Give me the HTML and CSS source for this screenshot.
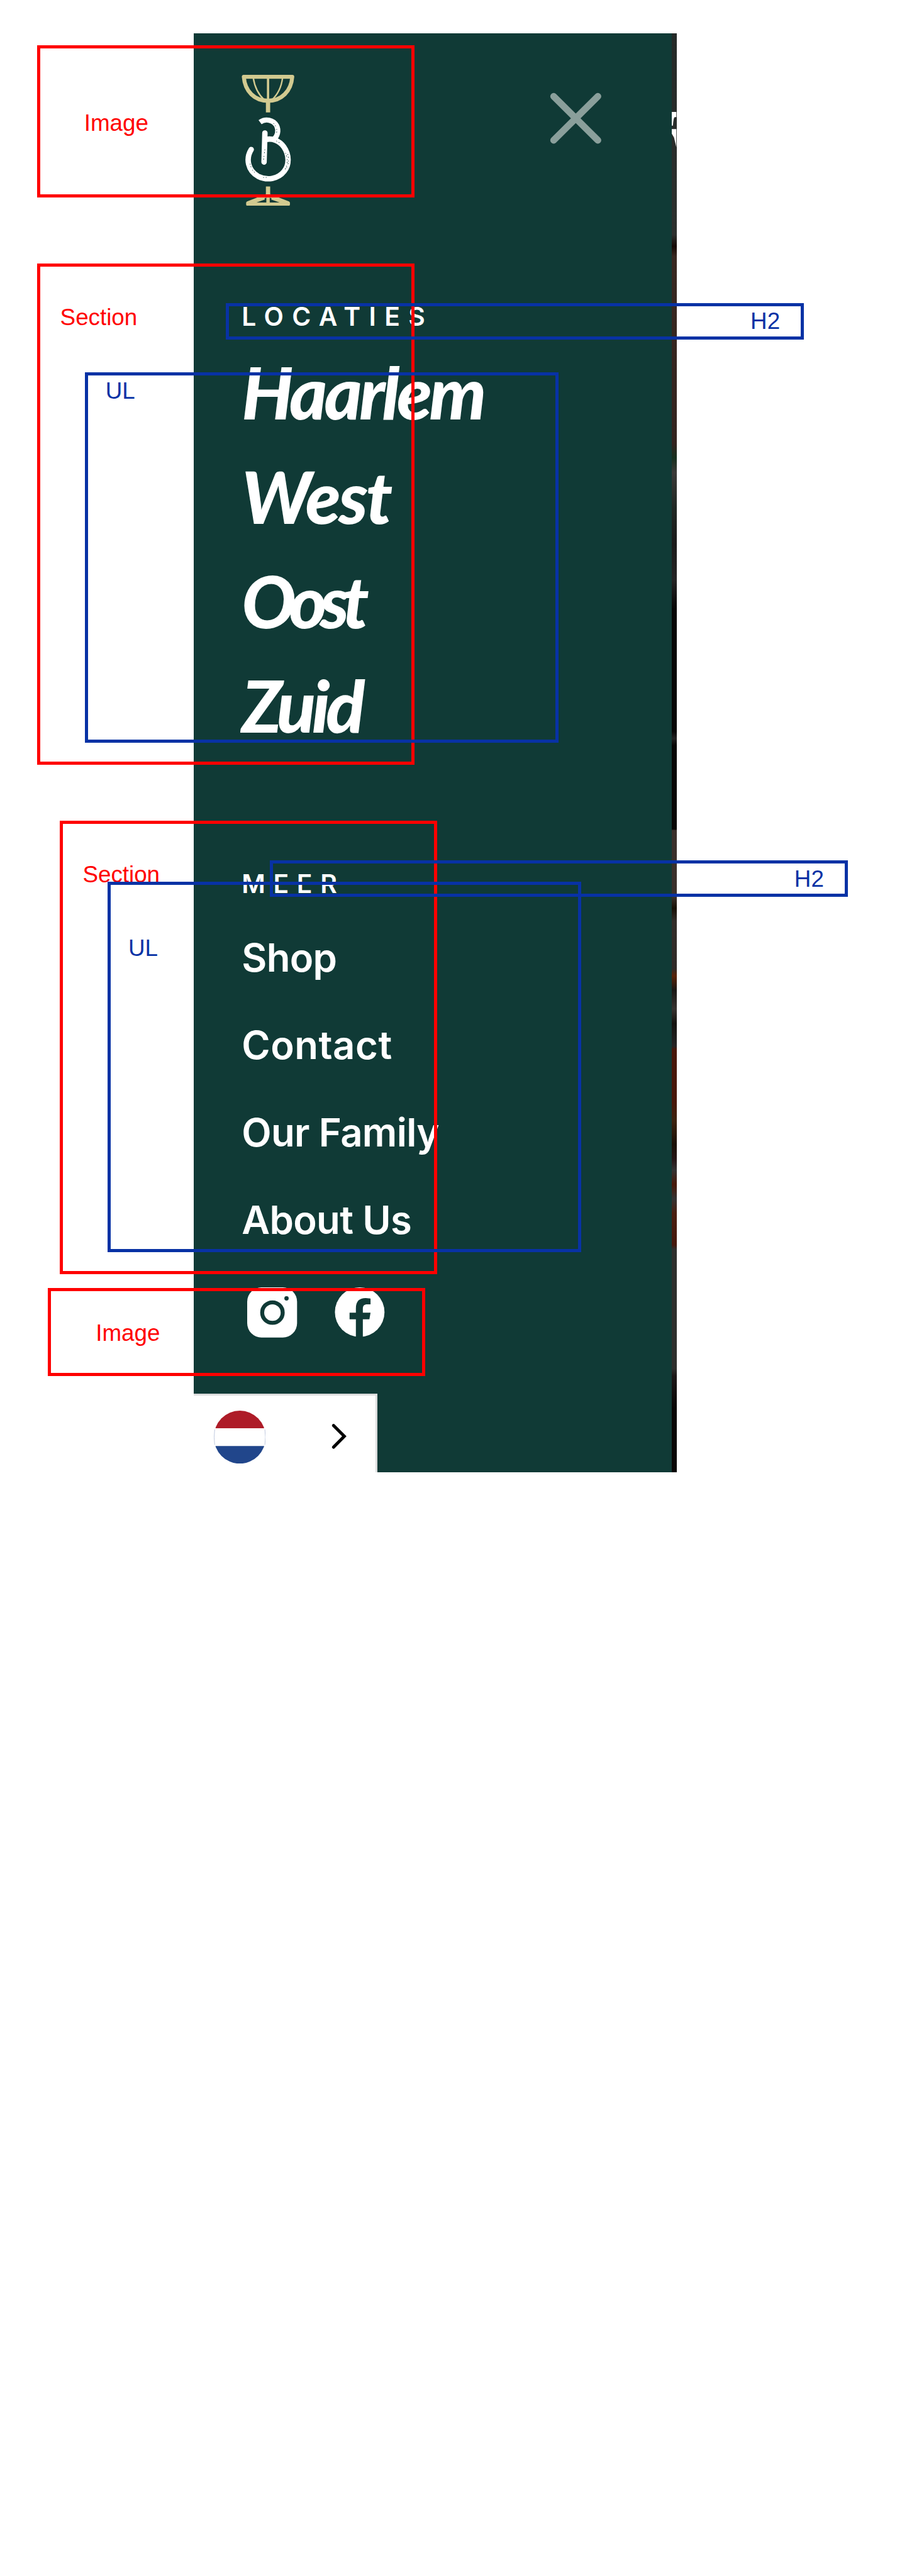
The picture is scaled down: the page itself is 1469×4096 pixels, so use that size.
FILE: index.html
```html
<!DOCTYPE html>
<html lang="nl">
<head>
<meta charset="utf-8">
<title>Menu structure</title>
<link rel="stylesheet" href="styles.css">
</head>
<body>
<nav class="panel">
  <header class="panel-head">
    <svg class="logo" viewBox="424 131 93 230">
      <g fill="none" stroke="#d2ca90">
        <path stroke-width="7" stroke-linejoin="round" d="M428 134.500H513C511 160 494 176.500 470.500 176.500S430 160 428 134.500Z"/>
        <path stroke-width="2.600" d="M444.500 136C447 152 454 166 464 175M496 136C494 152 487 166 477 175"/>
        <path stroke-width="4" d="M470.500 135V176"/>
        <path stroke-width="7.500" d="M470.500 176V197M470.500 327V343"/>
        <path stroke-width="6" stroke-linejoin="round" d="M435 358H506V356L470.500 342L435 356Z"/>
        <path stroke-width="6" d="M470.500 342V358M440 355.500L464 347M501 355.500L477 347"/>
      </g>
      <g fill="none" stroke="#fff" stroke-linejoin="round">
        <path stroke-width="9" d="M456.500 214C466 207 480 210 485.500 220C490 229 487 239 480.500 244.500"/>
        <path stroke-width="9.500" stroke-linecap="round" d="M465 233C464.500 250 464 268 463.500 284"/>
        <path stroke-width="9.500" stroke-linecap="round" d="M467 244.500C477 242 490 246 498 257C508 271 508 289 499 300C488 314 469 317 453 309C435 299 431 278 441 262"/>
      </g>
      <g fill="none" stroke="#103a36" stroke-width="1" stroke-dasharray="1.500 3 2 5">
        <path d="M485 247L494 252M501 268C506 280 505 290 499 299M505 270C508 282 506 290 501 297M439 287C441 296 444 300 449 304"/>
        <path d="M465 262L462 284M480 216C487 224 487 230 484 237M462 311H468"/>
      </g>
    </svg>
    <svg class="close" viewBox="964 161 93 93">
      <path d="M972 169L1049.500 246M1049.500 169L972 246" fill="none" stroke="#8a9f9b" stroke-width="12" stroke-linecap="round"/>
    </svg>
  </header>

  <h2 class="heading heading-locations">LOCATIES</h2>
  <ul class="locations">
    <li class="haarlem">Haarlem</li>
    <li class="west">West</li>
    <li class="oost">Oost</li>
    <li class="zuid">Zuid</li>
  </ul>

  <h2 class="heading heading-more">MEER</h2>
  <ul class="links">
    <li>Shop</li>
    <li class="wide">Contact</li>
    <li>Our Family</li>
    <li>About Us</li>
  </ul>

  <div class="social">
    <svg viewBox="434 2259 88 88">
      <rect x="434" y="2259" width="87.500" height="88" rx="25" fill="#fff"/>
      <circle cx="478.300" cy="2303.300" r="18" fill="none" stroke="#103a36" stroke-width="7"/>
      <circle cx="503" cy="2278.300" r="3.800" fill="#103a36"/>
    </svg>
    <svg viewBox="587.500 2259 88 88">
      <circle cx="631.500" cy="2302.500" r="43.500" fill="#fff"/>
      <path fill="#103a36" d="M624.800 2347V2315H613.700V2303.300H624.800V2296C624.800 2283 631 2277.700 642 2277.700L650.500 2278.500V2288.700H645C639 2288.700 637 2291 637 2297V2303.300H650.500L648.500 2315H637V2347Z"/>
    </svg>
  </div>

  <div class="language">
    <svg class="flag" viewBox="0 0 91 93">
      <clipPath id="round"><ellipse cx="45.500" cy="46.500" rx="45.500" ry="46.500"/></clipPath>
      <g clip-path="url(#round)">
        <path fill="#ae1c28" d="M0 0H91V31H0Z"/>
        <path fill="#fff" d="M0 31H91V62H0Z"/>
        <path fill="#21468b" d="M0 62H91V93H0Z"/>
      </g>
      <path d="M1.500 33Q-.5 46.500 1.500 60M89.500 33Q91.500 46.500 89.500 60" fill="none" stroke="#b9c3da" stroke-width="1"/>
    </svg>
    <svg class="chevron" viewBox="582 2497 27 46">
      <path d="M585.700 2501L604.500 2520L585.700 2539" fill="none" stroke="#000" stroke-width="5.500" stroke-linecap="round"/>
    </svg>
  </div>

  <div class="photo-edge">
    <svg viewBox="0 0 8 62"><path fill="#fff" d="M0 0H8V9H5Q3 10 2 24H0ZM0 30H8V62L4 45L0 38Z"/></svg>
  </div>
</nav>

<div class="note red note-logo">Image</div>
<div class="note red note-section-1">Section</div>
<div class="note red note-section-2">Section</div>
<div class="note red note-social">Image</div>
<div class="note blue note-h2-1">H2</div>
<div class="note blue note-ul-1">UL</div>
<div class="note blue note-h2-2">H2</div>
<div class="note blue note-ul-2">UL</div>
</body>
</html>
```
FILE: styles.css
```css
/* 1rem = ten design units */
html { font-size: 9.062px; background: #fff; }
* { box-sizing: border-box; }
body { margin: 0; min-height: 100vh; display: flow-root; position: relative; font-family: "Inter", sans-serif; }
h2, ul { margin: 0; padding: 0; }
ul { list-style: none; }
svg { display: block; flex: none; }

.panel {
  position: relative;
  width: 84.7rem;
  height: 252.5rem;
  margin: 5.8rem 0 0 34rem;
  padding: 7.3rem 0 0 8.4rem;
  background: #103a36;
  color: #fff;
  display: flex;
  flex-direction: column;
}
.panel-head { display: flex; justify-content: space-between; height: 23rem; padding-right: 13.1rem; }
.logo { width: 9.3rem; height: 23rem; }
.close { width: 9.3rem; height: 9.3rem; margin-top: 3rem; }

.heading { font-size: 4.5rem; line-height: 6rem; font-weight: 600; letter-spacing: 1.4rem; }
.heading-locations { margin-top: 16.5rem; letter-spacing: 1.48rem; }
.heading-more { margin-top: 19.2rem; }

.locations { margin-top: .95rem; }
.locations li {
  height: 18.35rem;
  font: italic 900 12.6rem/18.35rem "Lato", sans-serif;
  white-space: nowrap;
}
.haarlem { letter-spacing: -.5rem; }
.west { letter-spacing: -.35rem; }
.oost { letter-spacing: -1.2rem; }
.zuid { letter-spacing: -.7rem; }

.links { margin-top: 2.35rem; }
.links li { height: 15.32rem; font-size: 6.8rem; line-height: 15.32rem; font-weight: 600; letter-spacing: -.07rem; white-space: nowrap; }
.links .wide { letter-spacing: .06rem; }

.social { display: flex; gap: 6.55rem; margin: 4.14rem 0 0 1rem; }
.social svg { width: 8.8rem; height: 8.8rem; }

.language {
  width: 32.2rem;
  height: 13.8rem;
  margin: 9.8rem 0 0 -8.4rem;
  padding: 0 5.0rem 0 3.5rem;
  background: #fff;
  border: solid #dcdddd;
  border-width: .4rem .4rem 0 0;
  display: flex;
  align-items: center;
  justify-content: space-between;
}
.flag { width: 9.1rem; height: 9.3rem; margin-top: 1.1rem; }
.chevron { width: 2.7rem; height: 4.6rem; margin-top: .9rem; }

/* sliver of the page behind the open menu */
.photo-edge {
  position: absolute;
  top: 0;
  right: 0;
  width: .8rem;
  height: 100%;
  padding-top: 13.85rem;
  background: linear-gradient(#252a28, #2c302e 14%, #160a05 14.8%, #382821 15.5%, #33241f 28.5%,
    #17301f 29.5%, #3a3a38 30.5%, #202824 33%, #1b1b1b 35.5%, #252525 38%, #060606 40%,
    #060606 48.5%, #222 49%, #070605 49.5%, #080605 55.3%, #3a302b 55.4%, #3a302b 60%, #171005 60.8%,
    #322d29 61.7%, #302b28 65%, #5a2408 65.5%, #1a1815 66.5%, #373330 67.8%, #151410 68.8%,
    #252525 70.4%, #48180a 70.6%, #48180a 74.3%, #3c2410 75.6%, #1a1006 77.2%, #251515 78.2%,
    #333 79%, #481808 80%, #333 81%, #4a1f10 82%, #45180c 84.2%, #2e2f2d 84.5%, #2e2f2d 92.8%,
    #1c1818 93.3%, #080605 95.6%, #080605);
}
.photo-edge svg { width: .8rem; height: 6.2rem; }

/* outline annotations drawn over the panel */
.note { position: absolute; border: 5px solid; font: 4.06rem/1 "Liberation Sans", Arial, sans-serif; }
.red { color: #f00; border-color: #f00; }
.blue { color: #0832a5; border-color: #0832a5; }
.note-logo { left: 6.5rem; top: 8rem; width: 66.2rem; height: 26.6rem; padding: 11.05rem 0 0 7.7rem; }
.note-section-1 { left: 6.5rem; top: 46.2rem; width: 66.2rem; height: 88rem; padding: 6.95rem 0 0 3.5rem; }
.note-h2-1 { left: 39.6rem; top: 53.2rem; width: 101.4rem; height: 6.4rem; padding: .7rem 3.6rem 0 0; text-align: right; }
.note-ul-1 { left: 14.9rem; top: 65.3rem; width: 83.1rem; height: 65rem; padding: .75rem 0 0 3.05rem; }
.note-section-2 { left: 10.5rem; top: 144rem; width: 66.2rem; height: 79.6rem; padding: 6.95rem 0 0 3.45rem; }
.note-h2-2 { left: 47.3rem; top: 151rem; width: 101.4rem; height: 6.4rem; padding: .7rem 3.6rem 0 0; text-align: right; }
.note-ul-2 { left: 18.9rem; top: 154.7rem; width: 83.1rem; height: 65rem; padding: 9.15rem 0 0 3.05rem; }
.note-social { left: 8.4rem; top: 226rem; width: 66.2rem; height: 15.5rem; padding: 5.45rem 0 0 7.85rem; }
```
